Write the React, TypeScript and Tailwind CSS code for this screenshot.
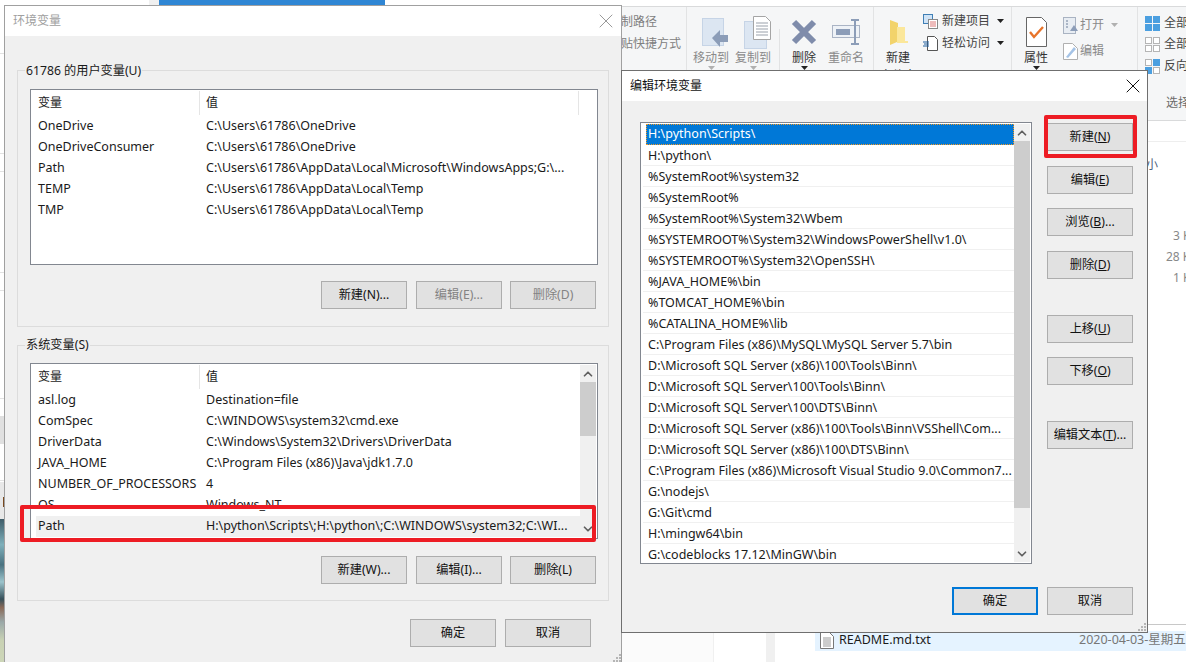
import type { ReactNode } from "react";
import { ChevronUp, ChevronDown, X } from "lucide-react";

const FONT = "font-['Noto_Sans','Noto_Sans_CJK_SC',sans-serif]";

const USER_VARS = [
  ["OneDrive", "C:\\Users\\61786\\OneDrive"],
  ["OneDriveConsumer", "C:\\Users\\61786\\OneDrive"],
  ["Path", "C:\\Users\\61786\\AppData\\Local\\Microsoft\\WindowsApps;G:\\..."],
  ["TEMP", "C:\\Users\\61786\\AppData\\Local\\Temp"],
  ["TMP", "C:\\Users\\61786\\AppData\\Local\\Temp"],
];

const SYSTEM_VARS = [
  ["asl.log", "Destination=file"],
  ["ComSpec", "C:\\WINDOWS\\system32\\cmd.exe"],
  ["DriverData", "C:\\Windows\\System32\\Drivers\\DriverData"],
  ["JAVA_HOME", "C:\\Program Files (x86)\\Java\\jdk1.7.0"],
  ["NUMBER_OF_PROCESSORS", "4"],
  ["OS", "Windows_NT"],
];

const PATHS = [
  "H:\\python\\Scripts\\",
  "H:\\python\\",
  "%SystemRoot%\\system32",
  "%SystemRoot%",
  "%SystemRoot%\\System32\\Wbem",
  "%SYSTEMROOT%\\System32\\WindowsPowerShell\\v1.0\\",
  "%SYSTEMROOT%\\System32\\OpenSSH\\",
  "%JAVA_HOME%\\bin",
  "%TOMCAT_HOME%\\bin",
  "%CATALINA_HOME%\\lib",
  "C:\\Program Files (x86)\\MySQL\\MySQL Server 5.7\\bin",
  "D:\\Microsoft SQL Server (x86)\\100\\Tools\\Binn\\",
  "D:\\Microsoft SQL Server\\100\\Tools\\Binn\\",
  "D:\\Microsoft SQL Server\\100\\DTS\\Binn\\",
  "D:\\Microsoft SQL Server (x86)\\100\\Tools\\Binn\\VSShell\\Com...",
  "D:\\Microsoft SQL Server (x86)\\100\\DTS\\Binn\\",
  "C:\\Program Files (x86)\\Microsoft Visual Studio 9.0\\Common7...",
  "G:\\nodejs\\",
  "G:\\Git\\cmd",
  "H:\\mingw64\\bin",
  "G:\\codeblocks 17.12\\MinGW\\bin",
];

function Btn({
  children,
  disabled,
  primary,
  className = "",
}: {
  children: ReactNode;
  disabled?: boolean;
  primary?: boolean;
  className?: string;
}) {
  return (
    <div
      className={`flex h-[28px] w-[86px] shrink-0 items-center justify-center bg-[#e1e1e1] text-[12.2px] whitespace-nowrap ${
        primary ? "border-2 border-[#0078d7]" : "border border-[#adadad]"
      } ${disabled ? "text-[#838383]" : "text-[#111]"} ${className}`}
    >
      {children}
    </div>
  );
}

function ScrollBar({ thumbHeight }: { thumbHeight: string }) {
  return (
    <div className="h-full shrink-0 py-[1px] pr-[1px]">
      <div className="flex h-full w-[16px] flex-col bg-[#f0f0f0]">
        <div className="flex h-[17px] shrink-0 items-center justify-center">
          <ChevronUp size={14} strokeWidth={3} className="text-[#606060]" />
        </div>
        <div className="flex-1">
          <div className={`bg-[#cdcdcd] ${thumbHeight}`} />
        </div>
        <div className="flex h-[17px] shrink-0 items-center justify-center">
          <ChevronDown size={14} strokeWidth={3} className="text-[#606060]" />
        </div>
      </div>
    </div>
  );
}

function VarRow({ name, value, selected }: { name: string; value: string; selected?: boolean }) {
  return (
    <div
      className={`flex h-[21px] shrink-0 items-center overflow-hidden text-[12.5px] whitespace-nowrap text-[#1a1a1a] ${
        selected ? "bg-[#f0f0f0]" : ""
      }`}
    >
      <span className="w-[168px] shrink-0 pl-[2px]">{name}</span>
      <span className="pl-[2px]">{value}</span>
    </div>
  );
}

function VarHeader() {
  return (
    <div className="my-[1px] flex h-[24px] shrink-0 text-[12px] text-[#1a1a1a]">
      <div className="flex w-[164px] items-center border-r border-[#e5e5e5] pl-[2px]">变量</div>
      <div className="flex flex-1 items-center pl-[6px]">值</div>
    </div>
  );
}

function GroupBox({
  title,
  titleTop,
  className,
  children,
}: {
  title: string;
  titleTop: string;
  className: string;
  children: ReactNode;
}) {
  return (
    <div className={`relative border border-[#dcdcdc] ${className}`}>
      <span
        className={`absolute left-[7px] bg-[#f0f0f0] px-[1px] text-[12.2px] leading-[18px] text-[#1a1a1a] ${titleTop}`}
      >
        {title}
      </span>
      {children}
    </div>
  );
}

function Grip({ className }: { className: string }) {
  return (
    <svg width="8" height="8" viewBox="0 0 8 8" className={`absolute ${className}`}>
      <g fill="#b5b5b5">
        <rect x="6" y="0" width="2" height="2" />
        <rect x="3" y="3" width="2" height="2" />
        <rect x="6" y="3" width="2" height="2" />
        <rect x="0" y="6" width="2" height="2" />
        <rect x="3" y="6" width="2" height="2" />
        <rect x="6" y="6" width="2" height="2" />
      </g>
    </svg>
  );
}

function EnvWindow() {
  return (
    <div className="absolute top-[5px] left-[4px] flex h-[658px] w-[618px] flex-col border border-[#a0a0a0] bg-[#f0f0f0]">
      <div className="flex h-[30px] shrink-0 items-center justify-between bg-white pr-[3px] pl-[8px] text-[12px] text-[#a0a0a0]">
        <span>环境变量</span>
        <X size={24} strokeWidth={1} className="text-[#999]" />
      </div>
      <div className="flex flex-col px-[12px] pt-[34px]">
        <GroupBox
          title="61786 的用户变量(U)"
          titleTop="top-[-9px]"
          className="h-[257px] px-[12px] pt-[18px]"
        >
          <div className="flex h-[176px] w-[568px] flex-col overflow-hidden border border-[#828790] bg-white pl-[5px]">
            <div className="flex shrink-0 pr-[18px]">
              <div className="flex-1">
                <VarHeader />
              </div>
              <div className="my-[1px] w-[1px] bg-[#e5e5e5]" />
            </div>
            {USER_VARS.map(([n, v]) => (
              <VarRow key={n} name={n} value={v} />
            ))}
          </div>
          <div className="mt-[16px] flex justify-end gap-[9px]">
            <Btn>新建(N)...</Btn>
            <Btn disabled>编辑(E)...</Btn>
            <Btn disabled className="-ml-[1px]">
              删除(D)
            </Btn>
          </div>
        </GroupBox>
        <GroupBox
          title="系统变量(S)"
          titleTop="top-[-10px]"
          className="mt-[18px] h-[256px] px-[12px] pt-[17px]"
        >
          <div className="flex h-[176px] w-[568px] overflow-hidden border border-[#828790] bg-white pl-[5px]">
            <div className="flex min-w-0 flex-1 flex-col overflow-hidden">
              <VarHeader />
              {SYSTEM_VARS.map(([n, v]) => (
                <VarRow key={n} name={n} value={v} />
              ))}
              <VarRow
                name="Path"
                value="H:\python\Scripts\;H:\python\;C:\WINDOWS\system32;C:\WI..."
                selected
              />
            </div>
            <ScrollBar thumbHeight="h-[54px]" />
          </div>
          <div className="mt-[17px] flex justify-end gap-[9px]">
            <Btn>新建(W)...</Btn>
            <Btn>编辑(I)...</Btn>
            <Btn className="-ml-[1px]">删除(L)</Btn>
          </div>
        </GroupBox>
        <div className="mt-[18px] flex justify-end gap-[9px] pr-[18px]">
          <Btn>确定</Btn>
          <Btn>取消</Btn>
        </div>
      </div>
      <Grip className="right-0 bottom-0" />
      {/* red marker round the Path row */}
      <div className="absolute top-[499px] left-[15px] h-[37px] w-[576px] rounded-[2px] border-[4px] border-[#ed1c24]" />
    </div>
  );
}

function EditWindow() {
  return (
    <div className="absolute top-[70px] left-[621px] flex h-[563px] w-[527px] flex-col border border-[#6f6f6f] bg-[#f0f0f0]">
      <div className="flex h-[30px] shrink-0 items-center justify-between bg-white pr-[2px] pl-[8px] text-[12px] text-[#111]">
        <span>编辑环境变量</span>
        <X size={24} strokeWidth={1} className="text-[#111]" />
      </div>
      <div className="flex flex-1 pt-[21px] pl-[18px]">
        <div className="flex h-[442px] w-[392px] shrink-0 border border-[#828790] bg-white">
          <div className="flex min-w-0 flex-1 flex-col overflow-hidden pt-[1px] pl-[2px]">
            {PATHS.map((p, i) =>
              i === 0 ? (
                <div
                  key={p}
                  className="ml-[3px] flex h-[21px] shrink-0 items-center border border-dotted border-[#f59a23] bg-[#0078d7] pl-[1px] text-[12.5px] whitespace-nowrap text-white"
                >
                  {p}
                </div>
              ) : (
                <div
                  key={p}
                  className="flex h-[21px] shrink-0 items-center border-b border-[#f0f0f0] pt-[2px] pl-[5px] text-[12.5px] whitespace-nowrap text-[#1a1a1a]"
                >
                  {p}
                </div>
              ),
            )}
          </div>
          <ScrollBar thumbHeight="h-[367px]" />
        </div>
        <div className="mt-[1px] ml-[15px] flex flex-col">
          <Btn>
            新建(<u>N</u>)
          </Btn>
          <Btn className="mt-[15px]">
            编辑(<u>E</u>)
          </Btn>
          <Btn className="mt-[14px]">
            浏览(<u>B</u>)...
          </Btn>
          <Btn className="mt-[15px]">
            删除(<u>D</u>)
          </Btn>
          <Btn className="mt-[36px]">
            上移(<u>U</u>)
          </Btn>
          <Btn className="mt-[14px]">
            下移(<u>O</u>)
          </Btn>
          <Btn className="mt-[36px]">
            编辑文本(<u>T</u>)...
          </Btn>
        </div>
      </div>
      <div className="flex justify-end gap-[9px] pr-[14px] pb-[17px]">
        <Btn primary>确定</Btn>
        <Btn>取消</Btn>
      </div>
      <Grip className="right-[1px] bottom-[1px]" />
      <div className="absolute top-[44px] left-[422px] h-[43px] w-[93px] rounded-[2px] border-[4px] border-[#ed1c24]" />
    </div>
  );
}

function Caret({ dark }: { dark?: boolean }) {
  return (
    <svg width="7" height="4" viewBox="0 0 7 4" className="shrink-0">
      <path d="M0 0h7L3.5 4z" fill={dark ? "#222" : "#b0b0b0"} />
    </svg>
  );
}

function BigItem({
  label,
  dark,
  icon,
  noCaret,
  extra,
  className = "",
}: {
  label: string;
  dark?: boolean;
  icon: ReactNode;
  noCaret?: boolean;
  extra?: string;
  className?: string;
}) {
  return (
    <div className={`flex shrink-0 flex-col items-center ${className}`}>
      <div className="flex h-[34px] items-center">{icon}</div>
      <span
        className={`mt-[1px] text-[12px] leading-[16px] whitespace-nowrap ${
          dark ? "text-[#333]" : "text-[#8a8a8a]"
        }`}
      >
        {label}
      </span>
      {extra ? (
        <span className="mt-[2px] text-[12px] leading-[16px] whitespace-nowrap text-[#333]">
          {extra}
        </span>
      ) : null}
      {!noCaret && !extra ? <Caret dark={dark} /> : null}
    </div>
  );
}

function SelectGrid({ on }: { on: number[] }) {
  return (
    <div className="grid h-[15px] w-[15px] shrink-0 grid-cols-2 gap-[1px]">
      {[0, 1, 2, 3].map((i) => (
        <div
          key={i}
          className={on.includes(i) ? "bg-[#4b9fe0]" : "border border-[#b5b5b5] bg-white"}
        />
      ))}
    </div>
  );
}

function Ribbon() {
  return (
    <div className="flex h-[115px] shrink-0 border-t border-b border-[#d9dadb] bg-[#f5f6f7] text-[12px] text-[#555]">
      {/* clipboard tail */}
      <div className="flex w-[66px] shrink-0 flex-col gap-[4px] overflow-hidden border-r border-[#e2e3e4] pt-[6px] whitespace-nowrap text-[#808080]">
        <span className="leading-[18px]">制路径</span>
        <span className="leading-[18px]">贴快捷方式</span>
      </div>
      {/* organise */}
      <div className="flex w-[187px] shrink-0 border-r border-[#e2e3e4] pt-[8px] pl-[6px]">
        <BigItem
          label="移动到"
          icon={
            <svg width="27" height="30" viewBox="0 0 27 30" className="ml-[8px]">
              <rect x="0.5" y="1.5" width="21" height="27" fill="#dce6f2" stroke="#c6d4e6" />
              <path d="M10 21l8-8v5h8v7h-8v5z" fill="#8c9db8" />
            </svg>
          }
        />
        <BigItem
          label="复制到"
          className="ml-[6px]"
          icon={
            <svg width="27" height="33" viewBox="0 0 27 33" className="ml-[8px]">
              <rect x="0.5" y="5.5" width="22" height="27" fill="#dce6f2" stroke="#c6d4e6" />
              <path d="M9.5 0.5h12l5 5v18h-17z" fill="#fff" stroke="#a5a5a5" />
              <path d="M12 7h12M12 10h12M12 13h12M12 16h12M12 19h12" stroke="#9aa1ab" />
            </svg>
          }
        />
        <div className="mt-[14px] ml-[8px] h-[46px] w-[1px] bg-[#e2e3e4]" />
        <BigItem
          label="删除"
          dark
          className="ml-[11px]"
          icon={
            <svg width="26" height="26" viewBox="0 0 26 26">
              <path d="M3 3l20 20M23 3L3 23" stroke="#7f8cab" strokeWidth="6" />
            </svg>
          }
        />
        <BigItem
          label="重命名"
          noCaret
          className="ml-[11px]"
          icon={
            <svg width="28" height="26" viewBox="0 0 28 26">
              <rect x="0.5" y="6.5" width="27" height="12" fill="#eef2f7" stroke="#aab4c5" />
              <rect x="4" y="10" width="14" height="6" fill="#8c9db8" />
              <path d="M19 1h8M23 1v24M19 25h8" stroke="#8c9db8" strokeWidth="2" fill="none" />
            </svg>
          }
        />
      </div>
      {/* new */}
      <div className="flex w-[138px] shrink-0 border-r border-[#e2e3e4] pt-[8px] pl-[12px]">
        <BigItem
          label="新建"
          dark
          extra="文件夹"
          className="w-[24px]"
          icon={
            <svg width="19" height="27" viewBox="0 0 19 27">
              <path d="M1 1l8 3v4h6v14h3v1H8l-7 3z" fill="#f2d36b" />
              <path d="M8 8h8v14h3v2H8z" fill="#fbe79b" />
            </svg>
          }
        />
        <div className="-mt-[3px] ml-[13px] flex flex-col gap-[4px] text-[#444]">
          <div className="flex h-[18px] items-center gap-[4px] whitespace-nowrap">
            <svg width="15" height="15" viewBox="0 0 15 15">
              <rect x="0.5" y="0.5" width="9" height="9" fill="#cfe3f6" stroke="#3f7fb5" />
              <rect x="5.5" y="5.5" width="9" height="9" fill="#fff" stroke="#888" />
              <path d="M7 8h6M7 10h6M7 12h6" stroke="#d77" />
            </svg>
            <span>新建项目</span>
            <span className="ml-[3px]">
              <Caret dark />
            </span>
          </div>
          <div className="flex h-[18px] items-center gap-[4px] whitespace-nowrap">
            <svg width="15" height="15" viewBox="0 0 15 15">
              <path d="M4.5 0.5h7l3 3v11h-10z" fill="#fff" stroke="#555" />
              <path d="M0 6h6M1 8h5M0 10h6" stroke="#1f5f9f" />
            </svg>
            <span>轻松访问</span>
            <span className="ml-[3px]">
              <Caret dark />
            </span>
          </div>
        </div>
      </div>
      {/* open */}
      <div className="flex w-[126px] shrink-0 border-r border-[#e2e3e4] pt-[8px] pl-[12px]">
        <BigItem
          label="属性"
          dark
          icon={
            <svg width="21" height="30" viewBox="0 0 21 30">
              <path d="M0.5 0.5h15l5 5v24h-20z" fill="#fff" stroke="#666" />
              <path d="M4 15l4 5 9-10" stroke="#e8742a" strokeWidth="2.4" fill="none" />
            </svg>
          }
        />
        <div className="mt-[1px] ml-[15px] flex flex-col gap-[8px] text-[#8a8a8a]">
          <div className="flex h-[18px] items-center gap-[2px] whitespace-nowrap">
            <svg width="15" height="17" viewBox="0 0 15 17">
              <rect x="0.5" y="0.5" width="12" height="16" fill="#e8edf3" stroke="#a9b3c2" />
              <path d="M3 4h2M3 7h2M3 10h2" stroke="#6d7f99" />
              <path d="M7 14l4-6 4 6z" fill="#8c9db8" />
            </svg>
            <span>打开</span>
            <span className="ml-[5px]">
              <Caret />
            </span>
          </div>
          <div className="flex h-[18px] items-center gap-[2px] whitespace-nowrap">
            <svg width="15" height="17" viewBox="0 0 15 17">
              <path d="M0.5 0.5h9l5 5v11h-14z" fill="#fff" stroke="#b0b0b0" />
              <path d="M3 14l8-10 2 2-8 9z" fill="#a5c3e6" />
            </svg>
            <span>编辑</span>
          </div>
          <div className="flex h-[18px] items-center gap-[2px] whitespace-nowrap">
            <div className="h-[14px] w-[15px] bg-[#f2dc8c]" />
            <span>历史记录</span>
          </div>
        </div>
      </div>
      {/* select */}
      <div className="flex min-w-0 flex-1 flex-col justify-between overflow-hidden pt-[8px] pl-[7px] text-[#444]">
        <div className="flex flex-col gap-[5px] whitespace-nowrap">
          <div className="flex h-[16px] items-center gap-[4px]">
            <SelectGrid on={[0, 1, 2, 3]} />
            <span>全部选择</span>
          </div>
          <div className="flex h-[16px] items-center gap-[4px]">
            <SelectGrid on={[]} />
            <span>全部取消</span>
          </div>
          <div className="mt-[1px] flex h-[16px] items-center gap-[4px]">
            <SelectGrid on={[1, 2]} />
            <span>反向选择</span>
          </div>
        </div>
        <div className="pb-[8px] pl-[21px] whitespace-nowrap text-[#6a6a6a]">选择</div>
      </div>
    </div>
  );
}

function Explorer() {
  return (
    <div className="absolute top-[6px] left-[621px] flex h-[656px] w-[565px] flex-col overflow-hidden bg-white">
      <Ribbon />
      <div className="ml-[526px] h-[21px] shrink-0 border-b border-[#eeeeee]" />
      <div className="ml-[526px] flex flex-col overflow-hidden text-[12px] whitespace-nowrap">
        <div className="mt-[14px] -ml-[1px] leading-[18px] text-[#4c607a]">小</div>
        <div className="mt-[53px] flex flex-col gap-[3px] text-[#888]">
          <span className="pl-[26px] leading-[18px]">3 KB</span>
          <span className="pl-[19px] leading-[18px]">28 KB</span>
          <span className="pl-[26px] leading-[18px]">1 KB</span>
        </div>
      </div>
      <div className="flex-1" />
      <div className="mb-[37px] ml-[526px] h-[1px] bg-[#c8c8c8]" />
      <div className="absolute top-[620px] left-0 h-[36px] w-[93px] border-r border-[#f0f0f0] bg-[#fbfbfb]" />
      <div className="absolute top-[620px] left-[145px] h-[36px] w-[9px] bg-[#f0f0f0]" />
      <div className="absolute top-[625px] right-0 left-[194px] flex h-[20px] items-center overflow-hidden bg-[#e5f3ff] pb-[2px] pl-[5px] text-[12.5px] whitespace-nowrap">
        <svg width="14" height="17" viewBox="0 0 14 17" className="shrink-0">
          <path d="M0.5 0.5h9l4 4v12h-13z" fill="#fff" stroke="#777" />
          <path d="M3 6h8M3 8h8M3 10h8M3 12h8M3 14h8" stroke="#999" />
        </svg>
        <span className="ml-[5px] w-[240px] shrink-0 text-[#1a1a1a]">README.md.txt</span>
        <span className="text-[#777]">2020-04-03-星期五</span>
      </div>
    </div>
  );
}

function Backdrop() {
  return (
    <>
      <div className="absolute top-0 left-[149px] h-[5px] w-[10px] bg-[#f0f0f0]" />
      <div className="absolute top-0 left-[159px] h-[5px] w-[226px] bg-[#2f86d4]" />
      <div className="absolute top-[53px] left-0 h-[1px] w-[4px] bg-[#e2e2e2]" />
      <div className="absolute top-[153px] left-0 h-[1px] w-[4px] bg-[#e2e2e2]" />
      <div className="absolute top-[171px] left-0 h-[1px] w-[4px] bg-[#e2e2e2]" />
      <div className="absolute top-[272px] left-0 h-[1px] w-[4px] bg-[#e2e2e2]" />
      <div className="absolute top-[290px] left-0 h-[1px] w-[4px] bg-[#e2e2e2]" />
      <div className="absolute top-[398px] left-0 h-[1px] w-[4px] bg-[#e2e2e2]" />
      <div className="absolute top-[416px] left-0 h-[28px] w-[4px] bg-[#e0e0e0]" />
      <div className="absolute top-[480px] left-0 h-[1px] w-[4px] bg-[#e2e2e2]" />
      <div className="absolute top-[482px] left-0 h-[37px] w-[4px] bg-[#e8e8e8]" />
      <div className="absolute top-[497px] left-[3px] h-[10px] w-[1px] bg-[#7a4a20]" />
      <div className="absolute top-[519px] left-0 h-[143px] w-[4px] bg-[linear-gradient(180deg,#3f5c68_0%,#7fb0bb_18%,#4a7280_32%,#9cc4cc_44%,#36505a_56%,#8a6a58_62%,#9aa8a8_72%,#c9d2b4_85%,#cdd6b8_100%)]" />
    </>
  );
}

export default function App() {
  return (
    <div className={`relative h-[662px] w-[1186px] overflow-hidden bg-white ${FONT}`}>
      <Backdrop />
      <Explorer />
      <EnvWindow />
      <EditWindow />
    </div>
  );
}
